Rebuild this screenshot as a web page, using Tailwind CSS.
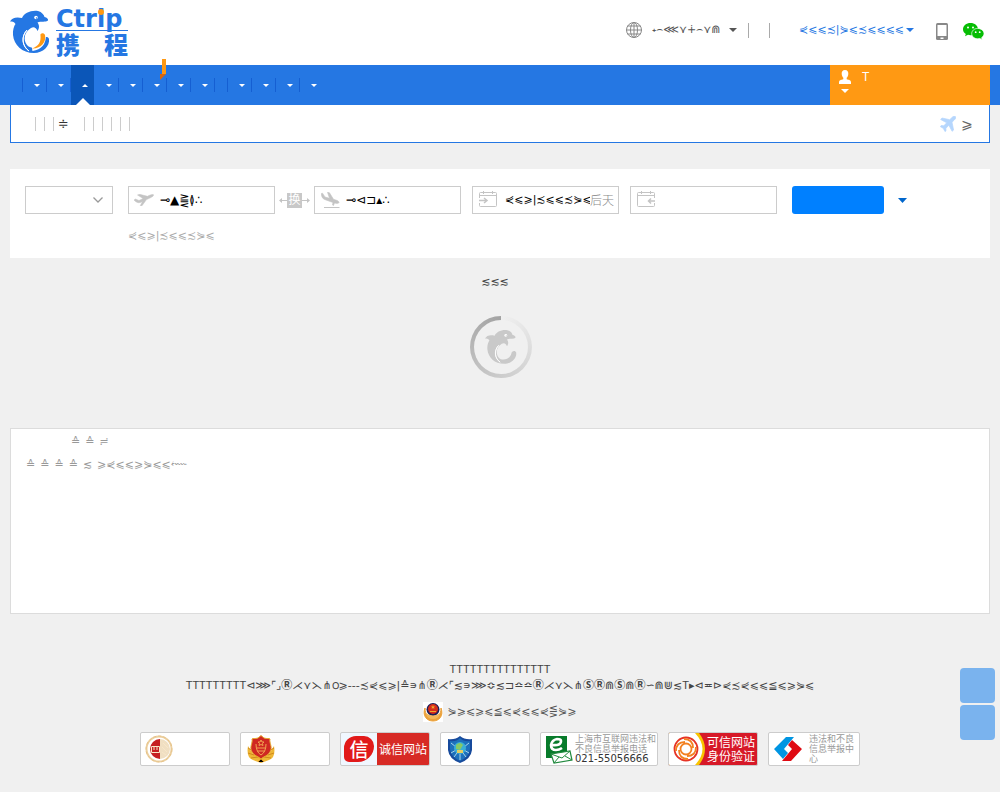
<!DOCTYPE html>
<html lang="zh-CN">
<head>
<meta charset="utf-8">
<meta name="viewport" content="width=device-width, initial-scale=1">
<title>携程机票</title>
<script src="https://cdn.jsdelivr.net/npm/@tailwindcss/browser@4"></script>
</head>
<body class="min-h-screen bg-[#f0f0f0] font-['DejaVu_Sans','Noto_Sans_CJK_SC',sans-serif] text-[11px] leading-4 text-[#444]">
<svg class="hidden">
  <symbol id="dolphin" viewBox="0 0 40 44">
    <path fill="currentColor" d="M0 11.500C2 8 6 6.500 12 8C14 3 21 0 28 1C32 2 34 5 34.500 7C37 7.500 38.500 9 38 10.500C36 12.500 31 11 27.500 12.500C30 16 29 19 27.500 21C26 17 23.500 16.500 21 18C14 22 13 30 17 35C21 40 31 38 33 30C33 27 38 25.500 39 29C40 36 33 43 24 43C12 43 4 35 3 25C2.500 20 4 16 5.500 14C4 11.500 2 11.500 0 11.500Z"/>
    <path d="M17 20C11 26 12 36 19 41C13 37 10 28 17 20Z" fill="#fff" stroke="#fff"/>
    <circle cx="26" cy="7.500" r="1.800" fill="#fff"/><circle cx="26.600" cy="8" r=".8" fill="currentColor"/>
  </symbol>
  <symbol id="caret" viewBox="0 0 8 4" preserveAspectRatio="none"><path fill="currentColor" d="M0 0h8L4 4z"/></symbol>
</svg>

<header class="flex h-[65px] items-start bg-white pl-[10px] pr-4">
  <a href="#" class="flex pt-[10px] text-[#2577e3]" aria-label="携程 Ctrip">
    <svg class="h-[44px] w-[40px]" viewBox="0 0 40 44"><use href="#dolphin"/><path d="M33 25C33 33 29 37 22 38" fill="none" stroke="#fff" stroke-width="6"/><path d="M30.500 25.500C29.500 23 34 22 35 25C36.500 32 31 39 22 38.500C29 36 31 32 30.500 25.500Z" fill="#ff9913"/></svg>
    <span class="ml-[6px] flex w-[72px] flex-col">
      <span class="relative h-[20px] text-[24px] leading-[18px] font-bold">Ctrip<i class="absolute left-[42px] -top-px size-[6px] rounded-full bg-[#ff9913]"></i></span>
      <span class="z-10 h-px bg-[#2577e3]"></span>
      <span class="flex h-[23px] justify-between font-['Noto_Sans_CJK_SC',sans-serif] text-[24px] leading-[26px] font-black"><b>携</b><b>程</b></span>
    </span>
  </a>
  <div class="ml-auto flex h-[60px] items-center text-[#555]">
    <svg class="size-4" viewBox="0 0 16 16" fill="none" stroke="#888"><circle cx="8" cy="8" r="7.500"/><ellipse cx="8" cy="8" rx="3.500" ry="7.500"/><path d="M8 0v16M0 8h16M1.500 4h13M1.500 12h13"/></svg>
    <button class="ml-[10px] flex items-center gap-1"><span class="w-[73px] whitespace-nowrap text-left">˖⌢⋘⋎∔⌢⋎⋒</span><svg class="h-1 w-2"><use href="#caret"/></svg></button>
    <i class="ml-[11px] h-[15px] w-px bg-[#aaa]"></i><i class="ml-5 h-[15px] w-px bg-[#aaa]"></i>
    <button class="ml-[29px] flex items-center gap-[5px] text-[#2577e3]"><span class="w-[102px] whitespace-nowrap text-left">⋞⩽⩽≾|⋟⩽≾⩽⩽⩽⩽</span><svg class="h-1 w-2"><use href="#caret"/></svg></button>
    <svg class="ml-[22px] mt-[2px] h-[17px] w-[12px]" viewBox="0 0 12 17"><rect width="12" height="17" rx="1.500" fill="#888"/><path d="M1.500 2h9v11h-9z" fill="#fff"/><path d="M4.500 14.500h3v1.500h-3z" fill="#fff"/></svg>
    <svg class="ml-[15px] mt-[2px] h-[17px] w-[21px]" viewBox="0 0 21 17" fill="#06bd04"><path d="M7.500 0C3.300 0 0 2.700 0 6.200c0 2 1 3.600 2.800 4.700L2 13.300l3-1.500 2.500.4C11.700 12.200 15 9.700 15 6.200S11.700 0 7.500 0Z"/><path d="M14.700 5.400c-3.300 0-6 2.300-6 5.200s2.700 5.200 6 5.200l2.200-.3 2.300 1.200-.6-2c1.500-1 2.400-2.300 2.400-4.100 0-2.900-3-5.200-6.300-5.200Z" stroke="#fff" stroke-width=".7"/><g fill="#fff"><circle cx="5" cy="4.500" r="1"/><circle cx="10" cy="4.500" r="1"/><circle cx="12.700" cy="9.200" r=".9"/><circle cx="16.700" cy="9.200" r=".9"/></g></svg>
  </div>
</header>

<nav class="relative flex h-10 bg-[#2577e3] pl-[22px] text-white">
  <ul class="flex h-10 items-center">
    <li class="h-[14px] w-px bg-[#155fd2]"></li>
    <li><button class="flex h-[14px] w-6 items-center justify-center border-r border-[#155fd2] pl-1" aria-label="1"><svg class="h-[3px] w-[6px]"><use href="#caret"/></svg></button></li>
    <li><button class="flex h-[14px] w-6 items-center justify-center border-r border-[#155fd2] pl-1" aria-label="2"><svg class="h-[3px] w-[6px]"><use href="#caret"/></svg></button></li>
    <li class="mr-px"><button class="relative flex h-10 w-[23px] items-center justify-center bg-[#0b56b8] pl-1" aria-label="3"><svg class="h-[3px] w-[6px] rotate-180"><use href="#caret"/></svg><svg class="absolute bottom-0 left-[5px] h-[7px] w-[14px]" viewBox="0 0 14 7"><path d="M0 7 7 0l7 7z" fill="#fff"/></svg></button></li>
    <li><button class="flex h-[14px] w-6 items-center justify-center border-r border-[#155fd2] pl-1" aria-label="4"><svg class="h-[3px] w-[6px]"><use href="#caret"/></svg></button></li>
    <li><button class="flex h-[14px] w-6 items-center justify-center border-r border-[#155fd2] pl-1" aria-label="5"><svg class="h-[3px] w-[6px]"><use href="#caret"/></svg></button></li>
    <li><button class="relative flex h-[14px] w-6 items-center justify-center border-r border-[#155fd2] pl-1" aria-label="6"><svg class="h-[3px] w-[6px]"><use href="#caret"/></svg><svg class="absolute -top-[19px] left-[17px] h-[21px] w-[6px]" viewBox="0 0 6 21"><path d="M2 0h4v15H2z" fill="#ff9913"/><path d="M0 15h6l-6 6z" fill="#d8660c"/></svg></button></li>
    <li><button class="flex h-[14px] w-6 items-center justify-center border-r border-[#155fd2] pl-1" aria-label="7"><svg class="h-[3px] w-[6px]"><use href="#caret"/></svg></button></li>
    <li><button class="flex h-[14px] w-6 items-center justify-center border-r border-[#155fd2] pl-1" aria-label="8"><svg class="h-[3px] w-[6px]"><use href="#caret"/></svg></button></li>
    <li class="h-[14px] w-[13px] border-r border-[#155fd2]"></li>
    <li><button class="flex h-[14px] w-6 items-center justify-center border-r border-[#155fd2] pl-1" aria-label="9"><svg class="h-[3px] w-[6px]"><use href="#caret"/></svg></button></li>
    <li><button class="flex h-[14px] w-6 items-center justify-center border-r border-[#155fd2] pl-1" aria-label="10"><svg class="h-[3px] w-[6px]"><use href="#caret"/></svg></button></li>
    <li><button class="flex h-[14px] w-6 items-center justify-center border-r border-[#155fd2] pl-1" aria-label="11"><svg class="h-[3px] w-[6px]"><use href="#caret"/></svg></button></li>
    <li><button class="flex h-[14px] w-6 items-center justify-center pl-1" aria-label="12"><svg class="h-[3px] w-[6px]"><use href="#caret"/></svg></button></li>
  </ul>
  <button class="mr-[10px] ml-auto flex w-40 flex-col items-start bg-[#ff9913] pt-1 pl-[9px] text-left">
    <span class="flex items-center gap-[11px]"><svg class="h-[14px] w-[12px]" viewBox="0 0 12 14" fill="#fff"><path d="M6 0C3.500 0 2.500 2 2.700 4c.1 2 1 3 1.600 3.800v1.400C2 9.700 0 10 0 12.500V14h12v-1.500c0-2.500-2-2.800-4.300-3.300V7.800C8.500 7 9.200 6 9.300 4 9.500 2 8.500 0 6 0Z"/></svg><span class="text-[12px] font-['Liberation_Sans',sans-serif]">T</span></span>
    <svg class="mt-[4px] ml-[2px] h-1 w-2"><use href="#caret"/></svg>
  </button>
</nav>

<div class="mx-[10px] flex h-[38px] items-center border-x border-b border-[#2577e3] bg-white pl-6">
  <div class="flex gap-2"><i class="h-[14px] w-px bg-[#ccc]"></i><i class="h-[14px] w-px bg-[#ccc]"></i><i class="h-[14px] w-px bg-[#ccc]"></i></div>
  <a href="#" class="ml-1 w-[26px] text-[13px] text-[#333]">≑</a>
  <div class="flex gap-2"><i class="h-[14px] w-px bg-[#ccc]"></i><i class="h-[14px] w-px bg-[#ccc]"></i><i class="h-[14px] w-px bg-[#ccc]"></i><i class="h-[14px] w-px bg-[#ccc]"></i><i class="h-[14px] w-px bg-[#ccc]"></i><i class="h-[14px] w-px bg-[#ccc]"></i></div>
  <a href="#" class="mr-4 ml-auto flex items-center gap-[5px] text-[#666]"><svg class="size-4" viewBox="0 0 16 16" fill="#b5d6fd" stroke="#b5d6fd" stroke-width=".7"><path d="M15.400.6C14.500-.1 13 .3 12 1.500L9.700 3.700 2 2 .7 3.500l6 3.300-2.900 3L1.200 9.500 0.400 10.700l2.800 1.500L5 15.600l1-.7-.1-2.700 3-2.900 3.200 6 1.500-1.200L12 6.200 14.300 4c1.200-1.200 2-2.500 1.100-3.400Z"/></svg><span class="text-[14px]">⩾</span></a>
</div>

<main>
  <form class="mx-[10px] mt-[26px] h-[89px] bg-white pt-[17px] pl-[15px]">
    <div class="flex items-center">
      <div class="relative h-7 w-[88px]"><select aria-label="航程" class="size-full appearance-none border border-[#ccc] bg-white"><option></option></select><svg class="pointer-events-none absolute top-[11px] right-[10px] h-[6px] w-[10px]" viewBox="0 0 10 6" fill="none" stroke="#999" stroke-width="1.300"><path d="m.5.5 4.500 4.500L9.500.5"/></svg></div>
      <label class="ml-[15px] flex h-7 w-[147px] items-center border border-[#ccc] pl-[5px]"><svg class="h-3 w-5 shrink-0" viewBox="0 0 20 12" fill="#c4c4c4" stroke="#c4c4c4" stroke-width=".5"><path d="m0 6 1.500-1 3.500 1.500 4-2L3.500 1 5.500.3l8 2C16 1 18 0 19.500.7c.5 1-1 2-3 3L12.500 5.600 8 11.700H6.200L8.500 7.500C5 9.300 3 9.300 0 6Z"/></svg><input aria-label="出发城市" class="ml-[6px] w-0 flex-1 text-[12px] text-black outline-none" value="⊸▲⪌≬∴"></label>
      <button type="button" class="mx-1 flex w-[31px] items-center text-white" aria-label="换"><svg class="h-[5px] w-2" viewBox="0 0 8 5" fill="#c4c4c4"><path d="M0 2.500 3 0v2h5v1H3v2z"/></svg><span class="size-[15px] bg-[#c8c8c8] text-center text-[12px] leading-[15px]">换</span><svg class="h-[5px] w-2" viewBox="0 0 8 5" fill="#c4c4c4"><path d="M8 2.500 5 0v2H0v1h5v2z"/></svg></button>
      <label class="flex h-7 w-[147px] items-center border border-[#ccc] pl-[6px]"><svg class="h-4 w-[19px] shrink-0" viewBox="0 0 19 16" fill="#c4c4c4"><path stroke="#c4c4c4" stroke-width=".6" d="M.3 1.500 1.500 1.200l2.500 3.800 4.500 1.300L6.500.3l2 .5 4 6.500c3 .8 5.500 1.700 5.500 3.200-.5 1.200-2.500 1-4.500.5l-1 2.500-1-.5.500-2.500L5 8C1.500 7 .5 5 .3 1.500Z"/><path d="M3 15h15.500v1H3z"/></svg><input aria-label="到达城市" class="ml-[6px] w-0 flex-1 text-[12px] text-black outline-none" value="⊸⊲⊐▴∴"></label>
      <label class="ml-[11px] flex h-7 w-[147px] items-center border border-[#ccc] pr-1 pl-[6px]"><svg class="mb-[2px] h-4 w-[18px] shrink-0" viewBox="0 0 18 16" fill="none" stroke="#c4c4c4"><path d="M.500 7V2.500q0-1 1-1h15q1 0 1 1v12q0 1-1 1h-15q-1 0-1-1V12M0 4.500h18M4.500 0v3M13.500 0v3"/><path d="M0 9.500h7M5 7l3 2.500L5 12" stroke-width="1.500"/></svg><input aria-label="出发日期" class="ml-[8px] w-0 flex-1 text-black outline-none" value="⋞⩽⩾|≾⩽⩽≾⋟⩽"><span class="font-['Noto_Sans_CJK_SC',sans-serif] text-[12px] font-light text-[#888]">后天</span></label>
      <label class="ml-[11px] flex h-7 w-[147px] items-center border border-[#ccc] pl-[6px]"><svg class="mb-[2px] h-4 w-[18px] shrink-0" viewBox="0 0 18 16" fill="none" stroke="#c4c4c4"><path d="M17.500 7V2.500q0-1-1-1h-15q-1 0-1 1v12q0 1 1 1h15q1 0 1-1V12M0 4.500h18M4.500 0v3M13.500 0v3"/><path d="M18 10h-6M14 7.500 11.500 10l2.500 2.500" stroke-width="1.500"/></svg><input aria-label="返程日期" class="ml-2 w-0 flex-1 outline-none"></label>
      <button type="button" aria-label="搜索" class="ml-[15px] h-7 w-[92px] rounded-[3px] bg-[#0080ff]"></button>
      <button type="button" aria-label="更多" class="ml-[14px] text-[#0066cc]"><svg class="h-[5px] w-[9px]"><use href="#caret"/></svg></button>
    </div>
    <div class="mt-[14px] ml-[103px] text-[#aaa]">⋞⩽⩾|≾⩽⩽≾⋟⩽</div>
  </form>

  <section class="flex h-[170px] flex-col items-center pt-4">
    <p class="mr-[10px]">≲≲≲</p>
    <div class="relative mt-[26px] ml-[2px] flex size-[62px] items-center justify-center rounded-full bg-[conic-gradient(#f0f0f0,#ccc_50%,#a3a3a3)]">
      <div class="flex size-[54px] items-center justify-center rounded-full bg-[#f0f0f0] text-[#c9c9c9]"><svg class="h-[36px] w-[32px]" viewBox="0 0 40 44"><use href="#dolphin"/></svg></div>
    </div>
  </section>

  <section class="mx-[10px] h-[186px] border border-[#dcdcdc] bg-white px-[15px] pt-[5px] text-[#999]">
    <p class="flex gap-[5px] pl-[45px]"><span>≙</span><span>≙</span><span>≓</span></p>
    <p class="mt-[7px] flex gap-[5px]"><span>≙</span><span>≙</span><span>≙</span><span>≙</span><span>≲</span><span>⩾⋞⩽⩽⩾⋟⩽⩽⬳</span></p>
  </section>
</main>

<footer class="flex flex-col items-center pt-[47px]">
  <p class="font-['Liberation_Sans',sans-serif]">TTTTTTTTTTTTTTT</p>
  <p class="whitespace-nowrap"><span class="font-['Liberation_Sans',sans-serif]">TTTTTTTTT</span>⊲⋙⌜⌟<b>Ⓡ</b>⋌⋎⋋⋔౦⩾---≾⋞⩽⩾|≙∍⋔<b>Ⓡ</b>⋌⌜≲∍⋙≎≲⊐≏≏<b>Ⓡ</b>⋌⋎⋋⋔<b>ⓈⓇ</b>⋒<b>Ⓢ</b>⋒<b>Ⓡ</b>∽⋒⋓≲<span class="font-['Liberation_Sans',sans-serif]">T</span>▸⊲≖⊳⋞≾⋞⩽⩽≦⩽⩾⋟⩽</p>
  <p class="mt-[8px] flex items-center gap-1 text-[#555]">
    <svg class="size-5" viewBox="0 0 20 20"><path fill="#fff" d="M0 0h20v20H0z"/><path d="M2 6C-1 14 4 19 10 19s11-5 8-13c0 7-3 9-8 9S2 13 2 6Z" fill="#eba13a" stroke="#eba13a"/><circle cx="10" cy="7.500" r="6.500" fill="#1d1d58"/><circle cx="10" cy="7" r="5" fill="#d52d1a"/><path d="m10 3 .6 1.400h1.400l-1 1 .4 1.500L10 6l-1.400.9.400-1.500-1-1h1.400zM7 9h6v1H7z" fill="#f0a52d"/><path d="M3 11q7 5 14 0-1 6-7 6t-7-6" fill="#f3b75a"/></svg>
    <span>⋟⩾⩽⩾⩽≦⩽⋞⩽⩽⋞⋚⋟⩾</span>
  </p>
  <div class="mt-[10px] flex gap-[10px] font-['Noto_Sans_CJK_SC',sans-serif]">
    <a href="#" aria-label="认证" class="h-[34px] w-[90px] rounded-[2px] border border-[#ccc] bg-white pl-1 pt-[2px]"><svg class="size-7" viewBox="0 0 28 28"><circle cx="14" cy="14" r="12.500" fill="#fff" stroke="#ecd0a0" stroke-width="2"/><circle cx="14" cy="14" r="13" fill="none" stroke="#e0b878" stroke-width=".6" stroke-dasharray="3 2"/><path d="M15 4a10 10 0 0 0 0 20z" fill="#c51f22"/><path d="M15 4a10 10 0 0 1 0 20z" fill="#f0dfc2"/><path d="M6.500 11.500h8v6h-8zM18 8l5 5M17 12l5 5M17 17l4 3" fill="none" stroke="#f8e6c8"/><path d="M9 11v4M12 11v4" stroke="#f8e6c8"/></svg></a>
    <a href="#" aria-label="工商" class="h-[34px] w-[90px] rounded-[2px] border border-[#ccc] bg-white pl-[6px] pt-[2px]"><svg class="size-7" viewBox="0 0 28 28"><path d="M1 11Q-1 23 6 25l8 3 8-3q7-2 5-14l-5 8H6z" fill="#efb735"/><path d="M1 13l5 3M1 18l6 2M4 23l7-1M27 13l-5 3M27 18l-6 2M24 23l-7-1M11 27l3-3 3 3" stroke="#d08a1c"/><path d="m14 .5 3 2.500c3 1 5 0 6 1-1 4 3 8 0 13-2 4-6 4-9 7-3-3-7-3-9-7C2 12 6 8 5 4c1-1 3 0 6-1z" fill="#cf2722" stroke="#e6a72d"/><path d="m14 5 1 2h2l-1.500 1.500.5 2-2-1-2 1 .5-2L11 7h2zM9 13h10M10 16h8M9 9q0 8 5 11 5-3 5-11" fill="none" stroke="#f1a250"/></svg></a>
    <a href="#" class="flex h-[34px] w-[90px] overflow-hidden rounded-[2px] border border-[#ccc] bg-[#f0f7ff]"><span class="flex w-9 items-center justify-center"><span class="flex h-[26px] w-[30px] items-center justify-center rounded-[12px_10px_16px_5px] bg-[#e11a1b] text-[19px] leading-[26px] font-medium text-white">信</span></span><span class="flex-1 bg-[#d72a25] text-center text-[12px] leading-8 whitespace-nowrap text-white">诚信网站</span></a>
    <a href="#" aria-label="网络安全" class="h-[34px] w-[90px] rounded-[2px] border border-[#ccc] bg-white pl-[6px] pt-[3px]"><svg class="h-[27px] w-[26px]" viewBox="0 0 26 27"><path d="M1 3q7 1 12-3 5 4 12 3v11q-1 9-12 13Q2 23 1 14Z" fill="#174a9c"/><path d="M3 5q6 1 10-3 4 4 10 3v8q-1 8-10 12Q4 21 3 13Z" fill="#1d70bc"/><path d="m4 7 5 4M22 7l-5 4M4 17l5-3M22 17l-5-3M13 18v6M7 21l3-4M19 21l-3-4" stroke="#a8d5eb"/><circle cx="13" cy="12" r="6" fill="#39afd6"/><path d="M9 9q4-4 7 0l-3 5-4-1z" fill="#86c967"/><path d="M10 14h6v3h-6z" fill="#e2cb62"/></svg></a>
    <a href="#" class="flex h-[34px] w-[118px] rounded-[2px] border border-[#ccc] bg-white pl-[5px] pt-px"><svg class="mt-[2px] h-7 w-[27px] shrink-0" viewBox="0 0 27 28"><path d="M0 0h21v22H0z" fill="#087b2b"/><path d="M6 9q9 1 9-4 0-2-4-2-5 1-6 6 0 5 5 5 3 0 6-2" fill="none" stroke="#fff" stroke-width="2.600"/><path d="m5 18 19-3 2 9-18 3z" fill="#fff" stroke="#218a3e" stroke-width="1.200"/><path d="m5 18 11 4 8-7M8 27l5-6M26 24l-7-4" fill="none" stroke="#218a3e"/></svg><span class="ml-[2px] flex flex-col text-[9px] leading-[10px] whitespace-nowrap text-[#999]"><span>上海市互联网违法和</span><span>不良信息举报电话</span><span class="font-['DejaVu_Sans',sans-serif] text-[10px] text-[#333]">021-55056666</span></span></a>
    <a href="#" class="flex h-[34px] w-[90px] overflow-hidden rounded-[2px] border border-[#ccc] bg-[#d71928]"><svg class="h-8 w-9 shrink-0" viewBox="0 0 36 32"><path d="M0 0h30q12 16 0 32H0z" fill="#f8c400"/><path d="M0 0h26q15 16 0 32H0z" fill="#fff"/><circle cx="17" cy="16" r="11.500" fill="none" stroke="#e63426" stroke-width="1.800"/><g fill="none" stroke="#f38121" stroke-width="1.800"><circle cx="17" cy="16" r="5.500"/><path d="M15 6q9 0 9 9M27 14q0 9-9 9M19 26q-9 0-9-9M7 18q0-9 9-9"/></g></svg><span class="flex-1 pt-[2px] text-center text-[12px] leading-[14px] whitespace-nowrap text-white">可信网站<br>身份验证</span></a>
    <a href="#" class="flex h-[34px] w-[92px] rounded-[2px] border border-[#ccc] bg-white pt-px pl-[5px]"><svg class="mt-[3px] h-6 w-7 shrink-0" viewBox="0 0 28 24"><path d="M12 0h8L10 12l4 4-5 6L0 12z" fill="#0095e2"/><path d="M18 3 28 12 17 24H8l10-12-4-4z" fill="#df0a13"/></svg><span class="ml-[7px] w-[46px] text-[9px] leading-[10px] text-[#999]">违法和不良信息举报中心</span></a>
  </div>
</footer>

<aside class="fixed right-[5px] bottom-[52px] flex flex-col gap-[2px]">
  <button aria-label="客服" class="size-[35px] rounded-[4px] bg-[#7ab3ee]"></button>
  <button aria-label="返回顶部" class="size-[35px] rounded-[4px] bg-[#7ab3ee]"></button>
</aside>
</body>
</html>
